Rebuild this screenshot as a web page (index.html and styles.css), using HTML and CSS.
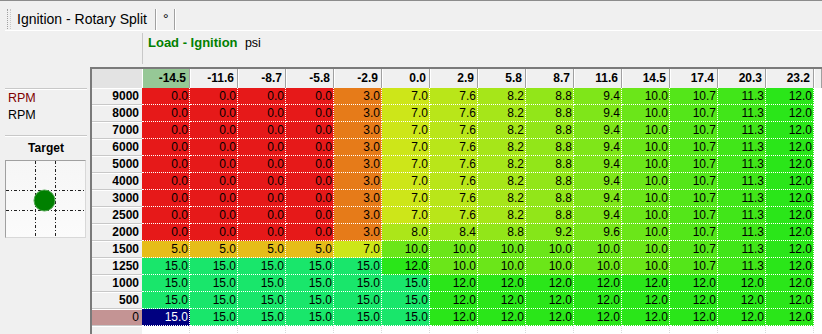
FILE: index.html
```html
<!DOCTYPE html>
<html lang="en">
<head>
    <meta charset="UTF-8">
    <meta name="viewport" content="width=device-width, initial-scale=1.0">
    <title>Ignition - Rotary Split</title>
    <link rel="stylesheet" href="styles.css">
</head>
<body>
    <div class="toolbar">
        <div class="toolbar-inner">
            <span class="grip"></span>
            <span class="tb-item">Ignition - Rotary Split</span>
            <span class="tb-sep"></span>
            <span class="tb-item tb-unit">°</span>
            <span class="tb-sep"></span>
        </div>
    </div>

    <div class="axis-bar">
        <div class="axis-title">
            <span class="axis-name">Load - Ignition</span>
            <span class="axis-unit">psi</span>
        </div>
    </div>

    <div class="main">
        <div class="side">
            <div class="side-line"></div>
            <div class="side-axis">RPM</div>
            <div class="side-unit">RPM</div>
            <div class="side-line side-line-2"></div>
            <div class="side-target">Target</div>
            <div class="target-box">
                <svg width="79" height="76" viewBox="0 0 79 76">
                    <line x1="29.5" y1="0" x2="29.5" y2="76" class="dash"/>
                    <line x1="49.5" y1="0" x2="49.5" y2="76" class="dash"/>
                    <line x1="0" y1="29.5" x2="79" y2="29.5" class="dash"/>
                    <line x1="0" y1="49.5" x2="79" y2="49.5" class="dash"/>
                    <circle cx="38.5" cy="39.5" r="10.5" fill="#008000" stroke="#4fa84f" stroke-width="1"/>
                </svg>
            </div>
        </div>

        <div class="map" id="map"></div>
    </div>

    <script>
        const cols = [-14.5, -11.6, -8.7, -5.8, -2.9, 0.0, 2.9, 5.8, 8.7, 11.6, 14.5, 17.4, 20.3, 23.2];
        const base = [0, 0, 0, 0, 3, 7, 7.6, 8.2, 8.8, 9.4, 10, 10.7, 11.3, 12];
        const high = [15, 15, 15, 15, 15, 15, 12, 12, 12, 12, 12, 12, 12, 12];
        const rows = [
            [9000, base], [8000, base], [7000, base], [6000, base], [5000, base],
            [4000, base], [3000, base], [2500, base],
            [2000, [0, 0, 0, 0, 3, 8, 8.4, 8.8, 9.2, 9.6, 10, 10.7, 11.3, 12]],
            [1500, [5, 5, 5, 5, 7, 10, 10, 10, 10, 10, 10, 10.7, 11.3, 12]],
            [1250, [15, 15, 15, 15, 15, 12, 10, 10, 10, 10, 10, 10.7, 11.3, 12]],
            [1000, high], [500, high], [0, high]
        ];

        const map = document.getElementById('map');

        function cell(cls, text) {
            const div = document.createElement('div');
            div.className = cls;
            div.textContent = text;
            map.appendChild(div);
            return div;
        }

        // header row
        cell('corner', '');
        cols.forEach((c, i) => cell(i === 0 ? 'hd hd-active' : 'hd', c.toFixed(1)));
        cell('hd hd-fill', '');

        // data rows
        rows.forEach(([rpm, values]) => {
            cell(rpm === 0 ? 'rl rl-active' : 'rl', rpm);
            values.forEach((v, i) => {
                const selected = rpm === 0 && i === 0;
                const td = cell(selected ? 'td td-selected' : 'td', v.toFixed(1));
                if (!selected) td.style.background = `hsl(${v * 9.6}, 80%, 50%)`;
            });
            cell('td-fill', '');
        });

        // empty row below the table
        cell('rl rl-empty', '');
        cols.forEach(() => cell('td-empty', ''));
        cell('td-fill', '');
    </script>
</body>
</html>
```

FILE: styles.css
```css
html, body {
    margin: 0;
    padding: 0;
    height: 334px;
    overflow: hidden;
}
body {
    font-family: 'Liberation Sans', Arial, sans-serif;
    font-size: 12px;
    background: #f0f0f0;
    color: #000;
}

/* toolbar */
.toolbar {
    border-top: 1px solid #8c8c8c;
}
.toolbar-inner {
    display: flex;
    align-items: flex-start;
    height: 29px;
    margin-left: 5px;
    border-bottom: 1px solid #fff;
}
.grip {
    width: 2px;
    height: 20px;
    margin: 8px 6px 0 2px;
    border-left: 1px dotted #a0a0a0;
    border-right: 1px dotted #c8c8c8;
}
.tb-item {
    font-size: 14px;
    line-height: 16px;
    margin-top: 10px;
    padding: 0 8px 0 0;
}
.tb-unit {
    padding: 0 5px 0 6px;
}
.tb-sep {
    width: 1px;
    height: 21px;
    margin-top: 8px;
    background: #a0a0a0;
    border-right: 1px solid #fff;
}

/* axis title above the table */
.axis-bar {
    height: 36px;
    padding-top: 2px;
    box-sizing: border-box;
}
.axis-title {
    margin-left: 142px;
    height: 31px;
    border-left: 1px solid #c8c8c8;
    padding-left: 5px;
    line-height: 16px;
    padding-top: 2px;
    box-sizing: border-box;
}
.axis-name {
    font-size: 13px;
    font-weight: bold;
    color: #008000;
    margin-right: 4px;
}
.axis-unit {
    font-size: 12.5px;
}

/* main area */
.main {
    display: flex;
    height: 267px;
}
.side {
    width: 90px;
    flex: none;
    padding: 21px 3px 0 5px;
    box-sizing: border-box;
}
.side-line {
    border-top: 1px solid #c8c8c8;
    border-bottom: 1px solid #fff;
}
.side-line-2 {
    margin-top: 11px;
}
.side-axis,
.side-unit {
    font-size: 12.5px;
    line-height: 17px;
    padding-left: 3px;
}
.side-axis {
    color: #800000;
}
.side-target {
    font-weight: bold;
    text-align: center;
    line-height: 17px;
    margin-top: 3px;
}
.target-box {
    width: 79px;
    height: 76px;
    margin-top: 3px;
    border: 1px solid #a0a0a0;
    border-right-color: #d8d8d8;
    border-bottom-color: #d8d8d8;
    background: linear-gradient(180deg, #f6f6f6, #fbfbfb);
}
.target-box svg {
    display: block;
}
.dash {
    stroke: #202020;
    stroke-width: 1;
    stroke-dasharray: 3 2 1 2;
}

/* the map grid */
.map {
    flex: 1;
    display: grid;
    grid-template-columns: 50px repeat(14, 48px) 1fr;
    grid-template-rows: 19px repeat(15, 17px);
    border-left: 2px solid #7a7a7a;
    border-top: 2px solid #7a7a7a;
    background: #fff;
    overflow: hidden;
}
.map > div {
    box-sizing: border-box;
    white-space: nowrap;
    overflow: hidden;
}
.corner {
    background: #e3e3e3;
}
.hd {
    background: #f0f0f0;
    border-right: 1px solid #a0a0a0;
    box-shadow: inset 1px 0 #fff;
    font-weight: bold;
    text-align: right;
    padding-right: 3px;
    line-height: 18px;
}
.hd-active {
    background: #96c896;
}
.rl {
    background: #f0f0f0;
    border-bottom: 1px solid #c8c8c8;
    box-shadow: inset 0 1px #fff;
    font-weight: bold;
    text-align: right;
    padding-right: 3px;
    line-height: 16px;
}
.rl-active {
    background: #c49494;
    font-weight: normal;
}
.rl-empty {
    border-bottom: none;
}
.td {
    border-right: 1px dotted #fff;
    border-bottom: 1px dotted #fff;
    text-align: right;
    padding-right: 1px;
    line-height: 16px;
}
.td-selected {
    background: #000080;
    color: #fff;
}
.td-fill {
    background: #fff;
}
.td-empty {
    background: #fff;
    border-right: 1px dotted #d8d8d8;
}
```
